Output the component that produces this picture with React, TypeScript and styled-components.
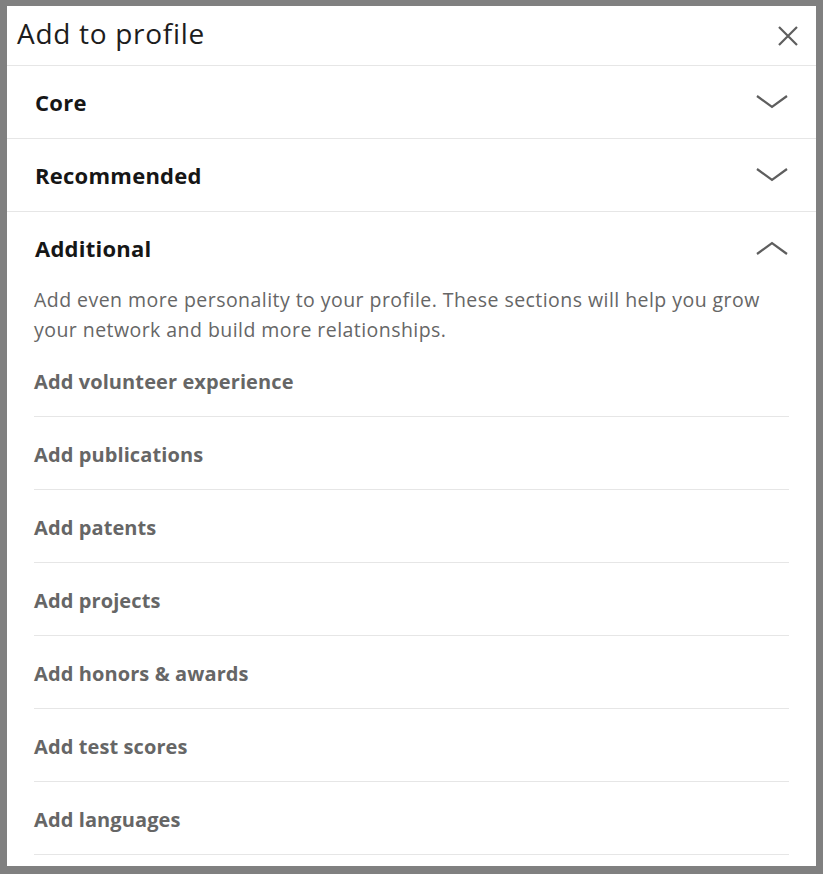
import * as React from 'react';
import styled, { createGlobalStyle } from 'styled-components';

const GlobalStyle = createGlobalStyle`
  html, body {
    margin: 0;
    padding: 0;
    background: #808080;
    font-family: 'Open Sans', 'Noto Sans', sans-serif;
  }
`;

const Page = styled.div`
  padding: 6px 7px 8px 7px;
  height: 874px;
  box-sizing: border-box;
`;

const Panel = styled.div`
  background: #ffffff;
  height: 860px;
  overflow: hidden;
  display: flex;
  flex-direction: column;
`;

const Header = styled.div`
  height: 59px;
  display: flex;
  align-items: center;
  justify-content: space-between;
  padding: 0 16px 0 10px;
  border-bottom: 1px solid #e6e6e6;
  flex-shrink: 0;
`;

const Title = styled.h1`
  margin: 0 0 5px 0;
  font-size: 28px;
  font-weight: 400;
  color: #1d1d1d;
  letter-spacing: 0.7px;
`;

const CloseButton = styled.button`
  border: none;
  background: none;
  padding: 0;
  width: 24px;
  height: 24px;
  display: flex;
  align-items: center;
  justify-content: center;
  cursor: pointer;
`;

const Section = styled.div<{ $last?: boolean }>`
  border-bottom: ${(p) => (p.$last ? 'none' : '1px solid #e6e6e6')};
`;

const SectionHead = styled.div`
  height: 72px;
  padding: 0 28px;
  display: flex;
  align-items: center;
  justify-content: space-between;
`;

const SectionTitle = styled.h2`
  margin: 0;
  font-size: 22px;
  font-weight: 700;
  color: #161616;
  letter-spacing: 0.25px;
`;

const SectionBody = styled.div`
  padding: 0 27px;
`;

const Description = styled.p`
  margin: 1px 0 -1px 0;
  font-size: 19.5px;
  line-height: 30px;
  color: #666666;
  letter-spacing: 0.45px;
`;

const ItemList = styled.div`
  display: flex;
  flex-direction: column;
`;

const Item = styled.div`
  height: 73px;
  box-sizing: border-box;
  padding-top: 3px;
  display: flex;
  align-items: center;
  border-bottom: 1px solid #e6e6e6;
  font-size: 20px;
  font-weight: 700;
  color: #666666;
  letter-spacing: 0.1px;
`;

function Chevron({ up }: { up?: boolean }) {
  return (
    <svg width="32" height="16" viewBox="0 0 32 16" fill="none">
      <path
        d={up ? 'M1 14 L16 3 L31 14' : 'M1 2 L16 13 L31 2'}
        stroke="#5e5e5e"
        strokeWidth="2.2"
      />
    </svg>
  );
}

function CloseIcon() {
  return (
    <svg width="20" height="20" viewBox="0 0 20 20" fill="none">
      <path d="M1 1 L19 19 M19 1 L1 19" stroke="#5e5e5e" strokeWidth="2.2" />
    </svg>
  );
}

const items = [
  'Add volunteer experience',
  'Add publications',
  'Add patents',
  'Add projects',
  'Add honors & awards',
  'Add test scores',
  'Add languages',
];

export default function App() {
  return (
    <>
      <GlobalStyle />
      <Page>
        <Panel>
          <Header>
            <Title>Add to profile</Title>
            <CloseButton aria-label="Close">
              <CloseIcon />
            </CloseButton>
          </Header>
          <Section>
            <SectionHead>
              <SectionTitle>Core</SectionTitle>
              <Chevron />
            </SectionHead>
          </Section>
          <Section>
            <SectionHead>
              <SectionTitle>Recommended</SectionTitle>
              <Chevron />
            </SectionHead>
          </Section>
          <Section $last>
            <SectionHead>
              <SectionTitle>Additional</SectionTitle>
              <Chevron up />
            </SectionHead>
            <SectionBody>
              <Description>
                Add even more personality to your profile. These sections will help you grow
                your network and build more relationships.
              </Description>
              <ItemList>
                {items.map((label) => (
                  <Item key={label}>{label}</Item>
                ))}
              </ItemList>
            </SectionBody>
          </Section>
        </Panel>
      </Page>
    </>
  );
}
